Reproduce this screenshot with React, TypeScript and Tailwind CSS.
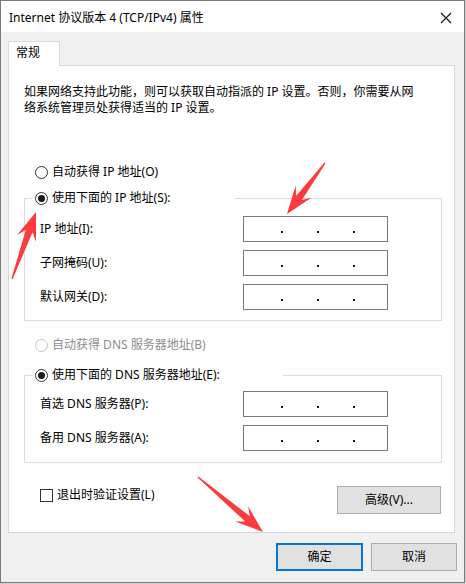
import React from "react";

type Pt = [number, number];

function arrowPoints(t: Pt, p: Pt, h = 28, hw = 10, sw = 3.5): string {
  const dx = p[0] - t[0];
  const dy = p[1] - t[1];
  const len = Math.hypot(dx, dy);
  const d: Pt = [dx / len, dy / len];
  const n: Pt = [-d[1], d[0]];
  const base: Pt = [p[0] - d[0] * h, p[1] - d[1] * h];
  const notch: Pt = [p[0] - d[0] * h * 0.72, p[1] - d[1] * h * 0.72];
  const pts: Pt[] = [
    [t[0] + n[0] * 0.6, t[1] + n[1] * 0.6],
    [notch[0] + n[0] * sw, notch[1] + n[1] * sw],
    [base[0] + n[0] * hw, base[1] + n[1] * hw],
    p,
    [base[0] - n[0] * hw, base[1] - n[1] * hw],
    [notch[0] - n[0] * sw, notch[1] - n[1] * sw],
    [t[0] - n[0] * 0.6, t[1] - n[1] * 0.6],
  ];
  return pts.map((q) => `${q[0].toFixed(1)},${q[1].toFixed(1)}`).join(" ");
}

function Radio({ checked, disabled }: { checked?: boolean; disabled?: boolean }) {
  return (
    <span
      className={
        "w-[13px] h-[13px] rounded-full border bg-white flex items-center justify-center shrink-0 " +
        (disabled ? "border-[#c4c4c4]" : "border-[#333333]")
      }
    >
      {checked && <span className="w-[7px] h-[7px] rounded-full bg-[#1a1a1a]" />}
    </span>
  );
}

function IpBox() {
  return (
    <div className="w-[145px] h-[26px] border border-[#7a7a7a] bg-white flex items-center pl-[37px] gap-[34px]">
      <span className="w-[2px] h-[2px] bg-[#111] mt-[5px]" />
      <span className="w-[2px] h-[2px] bg-[#111] mt-[5px]" />
      <span className="w-[2px] h-[2px] bg-[#111] mt-[5px]" />
    </div>
  );
}

function Row({ label }: { label: string }) {
  return (
    <div className="flex items-center h-[26px]">
      <span className="w-[218px] pl-[15px]">{label}</span>
      <IpBox />
    </div>
  );
}

export default function App() {
  return (
    <div className="w-[466px] h-[584px] bg-[#cfcfcf] relative text-[12px] text-black font-['Noto_Sans','Noto_Sans_CJK_SC',sans-serif]">
      <div className="w-[465px] h-[583px] border border-[#7a7a7a] bg-[#f0f0f0] flex flex-col">
        {/* Title bar */}
        <div className="h-[31px] bg-white flex items-center justify-between pl-[8px] pr-[10px] shrink-0">
          <span className="leading-[16px] pt-[2px]">Internet 协议版本 4 (TCP/IPv4) 属性</span>
          <svg width="12" height="12" viewBox="0 0 12 12" className="mt-[2px] mr-[2px]">
            <path d="M1 1 L11 11 M11 1 L1 11" stroke="#111" strokeWidth="1.1" />
          </svg>
        </div>

        {/* Client */}
        <div className="flex-1 pl-[7px] pt-[9px] flex flex-col">
          <div className="w-[52px] h-[25px] bg-white border border-b-0 border-[#d9d9d9] relative z-10 -mb-[1px] pl-[7px] pt-[3px] leading-[16px]">
            常规
          </div>
          <div className="w-[447px] h-[468px] bg-white border border-[#d9d9d9] pl-[15px] pt-[18px] flex flex-col">
            <div className="leading-[16px]">
              <div>如果网络支持此功能，则可以获取自动指派的 IP 设置。否则，你需要从网</div>
              <div>络系统管理员处获得适当的 IP 设置。</div>
            </div>

            <div className="mt-[48px] ml-[11px] flex items-center gap-[4px] h-[16px] leading-[16px]">
              <Radio />
              <span>自动获得 IP 地址(O)</span>
            </div>

            {/* IP group */}
            <div className="mt-[18px] w-[418px] h-[123px] border border-[#dcdcdc] flex flex-col">
              <div className="-mt-[9px] ml-[8px] w-[202px] h-[16px] bg-white pl-[2px] flex items-center gap-[4px] leading-[16px]">
                <Radio checked />
                <span>使用下面的 IP 地址(S):</span>
              </div>
              <div className="mt-[10px] flex flex-col gap-[8px]">
                <Row label="IP 地址(I):" />
                <Row label="子网掩码(U):" />
                <Row label="默认网关(D):" />
              </div>
            </div>

            <div className="mt-[16px] ml-[11px] flex items-center gap-[4px] h-[16px] leading-[16px] text-[#8d8d8d]">
              <Radio disabled />
              <span>自动获得 DNS 服务器地址(B)</span>
            </div>

            {/* DNS group */}
            <div className="mt-[22px] w-[418px] h-[88px] border border-[#dcdcdc] flex flex-col">
              <div className="-mt-[9px] ml-[8px] w-[250px] h-[16px] bg-white pl-[2px] flex items-center gap-[4px] leading-[16px]">
                <Radio checked />
                <span>使用下面的 DNS 服务器地址(E):</span>
              </div>
              <div className="mt-[8px] flex flex-col gap-[8px]">
                <Row label="首选 DNS 服务器(P):" />
                <Row label="备用 DNS 服务器(A):" />
              </div>
            </div>

            <div className="mt-[23px] w-[418px] flex items-start justify-between">
              <div className="mt-[2px] ml-[16px] flex items-center gap-[4px] leading-[14px]">
                <span className="w-[13px] h-[13px] border border-[#333333] bg-white" />
                <span>退出时验证设置(L)</span>
              </div>
              <div className="w-[104px] h-[28px] mr-[1px] bg-[#e1e1e1] border border-[#adadad] flex items-center justify-center">
                高级(V)...
              </div>
            </div>
          </div>

          <div className="mt-[10px] flex gap-[8px] pl-[268px]">
            <div className="w-[87px] h-[28px] bg-[#e1e1e1] border-2 border-[#0078d7] flex items-center justify-center">
              确定
            </div>
            <div className="w-[86px] h-[28px] bg-[#e1e1e1] border border-[#adadad] flex items-center justify-center">
              取消
            </div>
          </div>
        </div>
      </div>

      {/* Red annotation arrows */}
      <svg className="absolute left-0 top-0 pointer-events-none" width="466" height="584">
        <polygon points={arrowPoints([325, 163], [287, 214])} fill="#fd3a3d" />
        <polygon points={arrowPoints([12, 279], [36, 212])} fill="#fd3a3d" />
        <polygon points={arrowPoints([198, 477], [263, 532])} fill="#fd3a3d" />
      </svg>
    </div>
  );
}
